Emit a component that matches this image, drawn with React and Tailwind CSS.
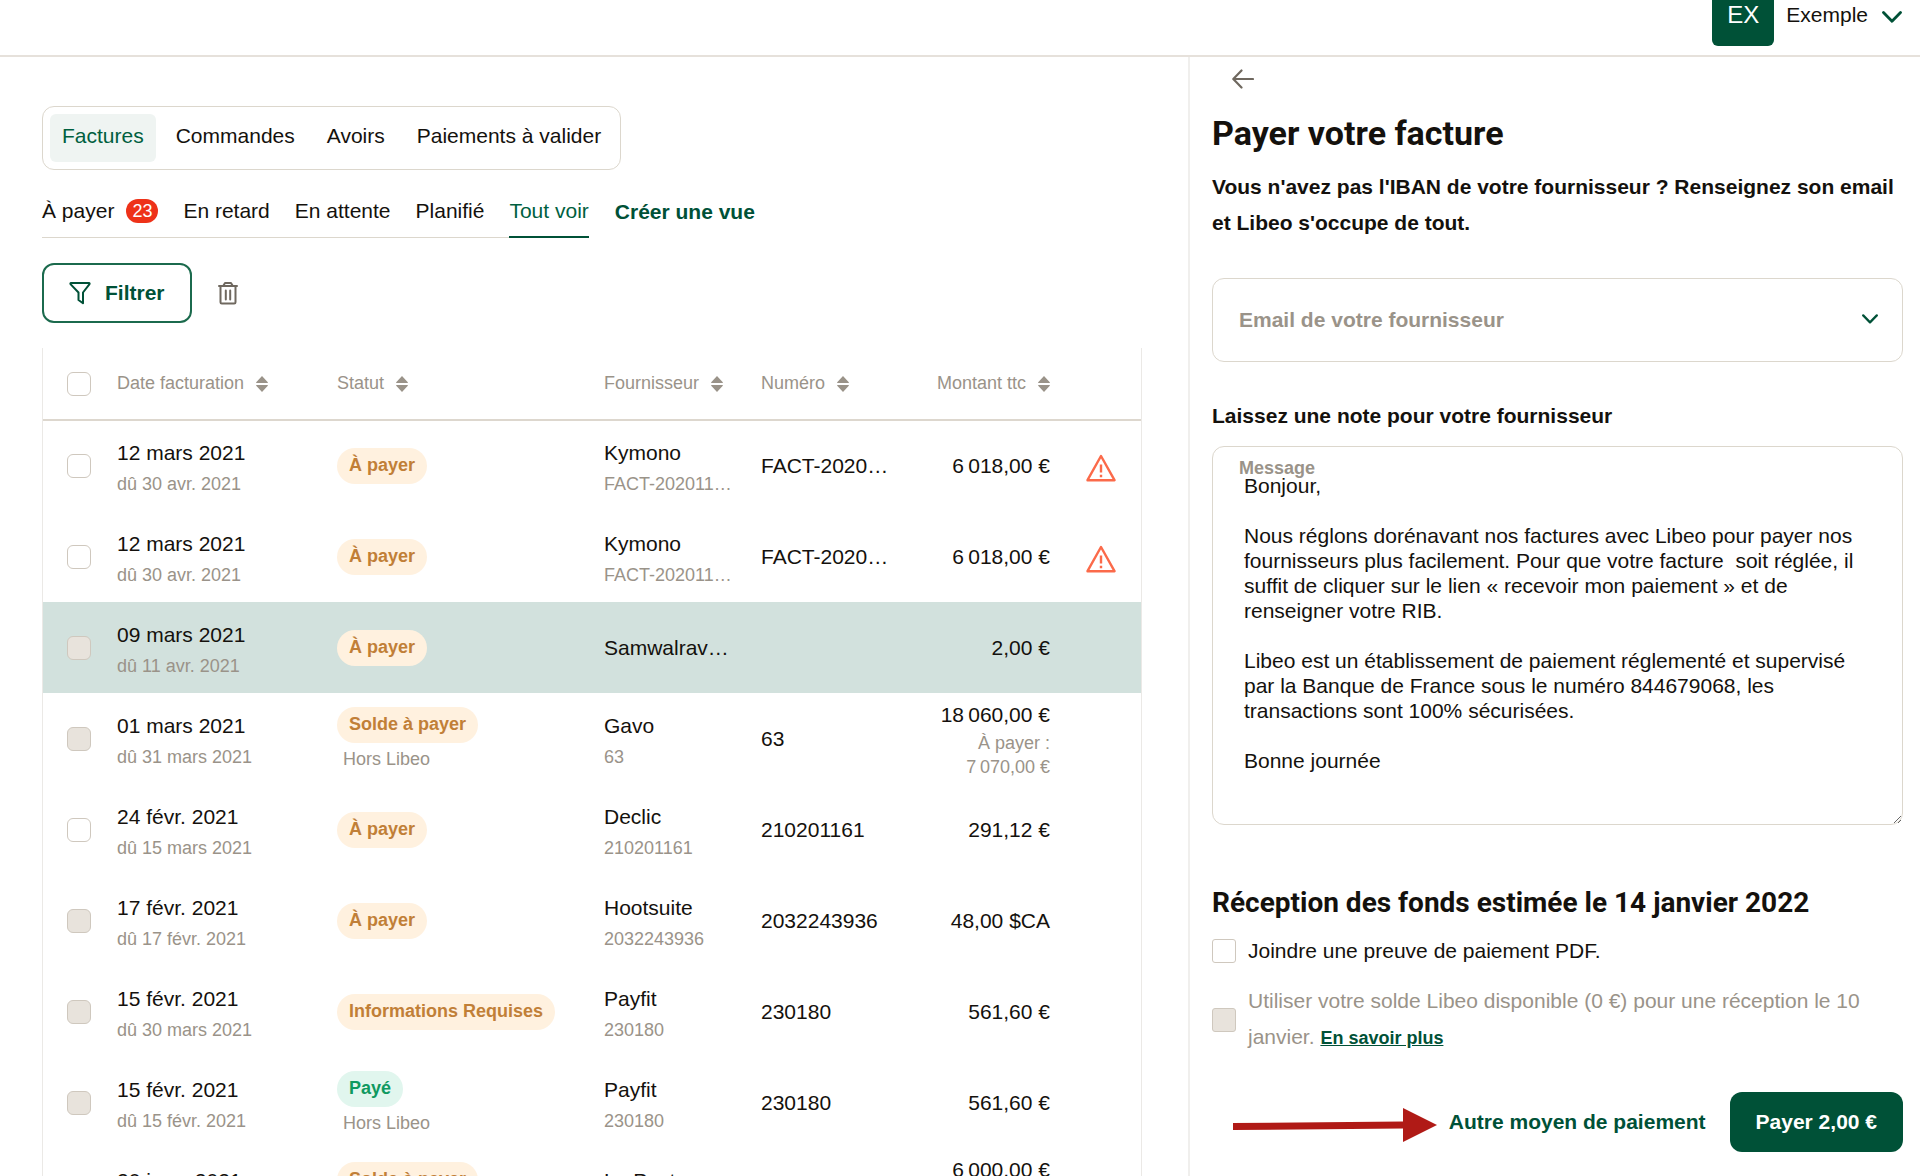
import clsx from "clsx";

const tabs = ["Factures", "Commandes", "Avoirs", "Paiements à valider"];

const views = [
  { label: "À payer", count: 23 },
  { label: "En retard" },
  { label: "En attente" },
  { label: "Planifié" },
  { label: "Tout voir", active: true },
];

const invoices = [
  {
    date: "12 mars 2021",
    due: "dû 30 avr. 2021",
    status: "À payer",
    supplier: "Kymono",
    ref: "FACT-202011…",
    number: "FACT-2020…",
    amount: "6\u202f018,00 €",
    warning: true,
  },
  {
    date: "12 mars 2021",
    due: "dû 30 avr. 2021",
    status: "À payer",
    supplier: "Kymono",
    ref: "FACT-202011…",
    number: "FACT-2020…",
    amount: "6\u202f018,00 €",
    warning: true,
  },
  {
    date: "09 mars 2021",
    due: "dû 11 avr. 2021",
    status: "À payer",
    supplier: "Samwalrav…",
    amount: "2,00 €",
    disabled: true,
    selected: true,
  },
  {
    date: "01 mars 2021",
    due: "dû 31 mars 2021",
    status: "Solde à payer",
    note: "Hors Libeo",
    supplier: "Gavo",
    ref: "63",
    number: "63",
    amount: "18\u202f060,00 €",
    left: "7\u202f070,00 €",
    disabled: true,
  },
  {
    date: "24 févr. 2021",
    due: "dû 15 mars 2021",
    status: "À payer",
    supplier: "Declic",
    ref: "210201161",
    number: "210201161",
    amount: "291,12 €",
  },
  {
    date: "17 févr. 2021",
    due: "dû 17 févr. 2021",
    status: "À payer",
    supplier: "Hootsuite",
    ref: "2032243936",
    number: "2032243936",
    amount: "48,00 $CA",
    disabled: true,
  },
  {
    date: "15 févr. 2021",
    due: "dû 30 mars 2021",
    status: "Informations Requises",
    supplier: "Payfit",
    ref: "230180",
    number: "230180",
    amount: "561,60 €",
    disabled: true,
  },
  {
    date: "15 févr. 2021",
    due: "dû 15 févr. 2021",
    status: "Payé",
    paid: true,
    note: "Hors Libeo",
    supplier: "Payfit",
    ref: "230180",
    number: "230180",
    amount: "561,60 €",
    disabled: true,
  },
  {
    date: "20 janv. 2021",
    due: "dû 20 févr. 2021",
    status: "Solde à payer",
    note: "Hors Libeo",
    supplier: "La Poste",
    ref: "4501",
    amount: "6\u202f000,00 €",
    left: "3\u202f000,00 €",
    disabled: true,
  },
];

const message = `Bonjour,

Nous réglons dorénavant nos factures avec Libeo pour payer nos fournisseurs plus facilement. Pour que votre facture  soit réglée, il suffit de cliquer sur le lien « recevoir mon paiement » et de renseigner votre RIB.

Libeo est un établissement de paiement réglementé et supervisé par la Banque de France sous le numéro 844679068, les transactions sont 100% sécurisées.

Bonne journée`;

const Chevron = ({ className }) => (
  <svg viewBox="0 0 20 12" fill="none" className={className}>
    <path
      d="M1.5 1.5 10 10.2l8.500-8.700"
      stroke="currentColor"
      strokeWidth="2.800"
      strokeLinecap="round"
      strokeLinejoin="round"
    />
  </svg>
);

const SortIcon = () => (
  <svg viewBox="0 0 12 16" fill="currentColor" className="h-4 w-3 shrink-0">
    <path d="M6 0 11.800 6.200a.5.5 0 0 1-.4.8H.6a.5.5 0 0 1-.4-.8Z" />
    <path d="M6 16 11.800 9.800a.5.5 0 0 0-.4-.8H.6a.5.5 0 0 0-.4.8Z" />
  </svg>
);

const FilterIcon = () => (
  <svg viewBox="0 0 22 24" fill="none" className="h-6 w-[22px]">
    <path
      d="M2 2h18c.6 0 .8.7.5 1.100L14 11.500V22.300l-4.500-3.300v-7.500L1.500 3.100C1.200 2.700 1.400 2 2 2Z"
      stroke="currentColor"
      strokeWidth="2"
      strokeLinejoin="round"
    />
  </svg>
);

const TrashIcon = () => (
  <svg viewBox="0 0 20 24" fill="none" stroke="currentColor" strokeWidth="2" className="h-6 w-5">
    <path d="M1 5h18" strokeLinecap="round" />
    <path d="M5.500 4.500 7 2h6l1.500 2.500" strokeLinejoin="round" />
    <path d="M2.500 5v16.200c0 .8.500 1.300 1.300 1.300h12.400c.8 0 1.300-.5 1.300-1.300V5" />
    <path d="M7.800 9.500v9M12.200 9.500v9" strokeLinecap="round" />
  </svg>
);

const WarningIcon = () => (
  <svg viewBox="0 0 30 28" fill="none" stroke="#fb6a4a" className="mt-1 h-7 w-[30px]">
    <path d="M15 2 28.500 26.200h-27Z" strokeWidth="2.400" strokeLinejoin="round" />
    <path d="M15 10.500v8M15 20.800v2.400" strokeWidth="2.400" />
  </svg>
);

const Checkbox = ({ className, ...props }) => (
  <input
    type="checkbox"
    className={clsx(
      "block size-6 shrink-0 appearance-none border border-[#cfc8be] bg-white disabled:bg-[#e8e3dc]",
      className
    )}
    {...props}
  />
);

const Badge = ({ paid, children }) => (
  <span
    className={clsx(
      "inline-block h-9 rounded-full px-3 text-[18px] leading-[34px] font-bold whitespace-nowrap",
      paid ? "bg-[#e1f6ee] text-[#0f9960]" : "bg-[#fff1df] text-[#c17f37]"
    )}
  >
    {children}
  </span>
);

const SortHeader = ({ children, right }) => (
  <th className="p-0 font-normal">
    <button
      type="button"
      className={clsx("flex items-center gap-3 whitespace-nowrap", right && "ml-auto")}
    >
      {children}
      <SortIcon />
    </button>
  </th>
);

const InvoiceRow = ({ invoice }) => (
  <tr className={clsx("h-[91px]", invoice.selected && "bg-[#d2e1dd]")}>
    <td className="p-0 pl-6">
      <Checkbox
        className="rounded-[6px]"
        disabled={invoice.disabled}
        aria-label={`Facture ${invoice.supplier} du ${invoice.date}`}
      />
    </td>
    <td className="p-0 pt-1">
      <div className="leading-8">{invoice.date}</div>
      <div className="text-[18px] leading-[30px] text-[#9a9389]">{invoice.due}</div>
    </td>
    <td className={clsx("p-0", invoice.note && "pt-1")}>
      <Badge paid={invoice.paid}>{invoice.status}</Badge>
      {invoice.note && (
        <div className="pl-[6px] text-[18px] leading-8 text-[#9a9389]">{invoice.note}</div>
      )}
    </td>
    <td className={clsx("p-0 whitespace-nowrap", invoice.ref && "pt-1")}>
      <div className="leading-8">{invoice.supplier}</div>
      {invoice.ref && (
        <div className="text-[18px] leading-[30px] text-[#9a9389]">{invoice.ref}</div>
      )}
    </td>
    <td className="p-0 whitespace-nowrap">{invoice.number}</td>
    <td className="p-0 text-right whitespace-nowrap">
      <div className="leading-8">{invoice.amount}</div>
      {invoice.left && (
        <div className="text-[18px] leading-6 text-[#9a9389]">
          À payer :
          <br />
          {invoice.left}
        </div>
      )}
    </td>
    <td className="p-0 pl-9">{invoice.warning && <WarningIcon />}</td>
  </tr>
);

const Header = () => (
  <header className="flex h-[57px] shrink-0 justify-end border-b-2 border-[#e6e1db] pr-[18px]">
    <button type="button" className="-mt-4 flex h-[62px] items-center">
      <span className="flex h-[62px] w-[62px] items-center justify-center rounded-[6px] bg-[#005137] text-[24px] text-white">
        EX
      </span>
      <span className="pl-3">Exemple</span>
      <Chevron className="mt-1 ml-[14px] h-3 w-5 text-[#005137]" />
    </button>
  </header>
);

const InvoiceList = () => (
  <main className="min-w-0 flex-1 pt-[49px] pr-[46px] pl-[42px]">
    <nav className="flex w-fit gap-2 rounded-xl border border-[#dcd7cd] p-[7px]">
      {tabs.map((tab, i) => (
        <button
          key={tab}
          type="button"
          className={clsx(
            "h-12 rounded-md px-3 pb-1",
            i === 0 && "bg-[#eff4f2] text-[#005f3f]"
          )}
        >
          {tab}
        </button>
      ))}
    </nav>

    <div className="mt-4 flex gap-[26px]">
      <nav className="flex gap-[25px] border-b border-[#dcd7cd]">
        {views.map((view) => (
          <button
            key={view.label}
            type="button"
            className={clsx(
              "-mb-px flex h-[52px] items-center border-b-2",
              view.active ? "border-[#005137] text-[#005f3f]" : "border-transparent"
            )}
          >
            {view.label}
            {view.count && (
              <span className="ml-3 h-6 rounded-full bg-[#ee3219] px-[6px] text-[18px] leading-6 text-white">
                {view.count}
              </span>
            )}
          </button>
        ))}
      </nav>
      <button type="button" className="h-[52px] font-bold text-[#005137]">
        Créer une vue
      </button>
    </div>

    <div className="mt-[25px] flex items-center gap-[26px]">
      <button
        type="button"
        className="flex h-[60px] items-center gap-[14px] rounded-xl border-2 border-[#1b6a4d] px-[25px] font-bold text-[#005137]"
      >
        <FilterIcon />
        Filtrer
      </button>
      <button type="button" aria-label="Supprimer" className="text-[#6f685f]">
        <TrashIcon />
      </button>
    </div>

    <div className="mt-[25px] border-x border-[#ebe9e6]">
      <table className="w-full table-fixed border-collapse text-left">
        <colgroup>
          <col className="w-[74px]" />
          <col className="w-[220px]" />
          <col />
          <col className="w-[157px]" />
          <col className="w-[157px]" />
          <col className="w-[132px]" />
          <col className="w-[91px]" />
        </colgroup>
        <thead>
          <tr className="h-[72px] border-b-2 border-[#ddd7ce] text-[18px] text-[#9a9389]">
            <th className="p-0 pl-6">
              <Checkbox className="rounded-[6px]" aria-label="Tout sélectionner" />
            </th>
            <SortHeader>Date facturation</SortHeader>
            <SortHeader>Statut</SortHeader>
            <SortHeader>Fournisseur</SortHeader>
            <SortHeader>Numéro</SortHeader>
            <SortHeader right>Montant ttc</SortHeader>
            <td className="p-0" />
          </tr>
        </thead>
        <tbody>
          {invoices.map((invoice, i) => (
            <InvoiceRow key={i} invoice={invoice} />
          ))}
        </tbody>
      </table>
    </div>
  </main>
);

const PaymentPanel = () => (
  <aside className="w-[38.125%] shrink-0 border-l-2 border-[#f0efed] pt-2 pr-[17px] pl-[22px]">
    <button type="button" aria-label="Retour" className="ml-5 block text-[#6f685f]">
      <svg viewBox="0 0 22 20" fill="none" className="mt-1 h-5 w-[22px]">
        <path
          d="M21 10H1.500M9.500 1.500 1.300 10l8.200 8.500"
          stroke="currentColor"
          strokeWidth="2.200"
          strokeLinecap="round"
          strokeLinejoin="round"
        />
      </svg>
    </button>

    <h1 className="mt-6 font-['Roboto',sans-serif] text-[34px] leading-10 font-bold">
      Payer votre facture
    </h1>
    <p className="mt-4 leading-9 font-bold">
      Vous n'avez pas l'IBAN de votre fournisseur ? Renseignez son email et Libeo s'occupe de tout.
    </p>

    <div className="relative mt-[37px]">
      <select
        aria-label="Email de votre fournisseur"
        defaultValue=""
        className="h-[84px] w-full appearance-none rounded-xl border border-[#dcd7cd] bg-white px-[26px] font-bold text-[#9a9389]"
      >
        <option value="">Email de votre fournisseur</option>
      </select>
      <Chevron className="pointer-events-none absolute top-9 right-[25px] h-[10px] w-4 text-[#005137]" />
    </div>

    <h2 className="mt-9 leading-9 font-bold">Laissez une note pour votre fournisseur</h2>
    <div className="relative mt-3">
      <label
        htmlFor="message"
        className="absolute top-[10px] left-[27px] text-[18px] leading-6 font-bold text-[#9a9389]"
      >
        Message
      </label>
      <textarea
        id="message"
        defaultValue={message}
        className="block h-[379px] w-full rounded-xl border border-[#dcd7cd] pt-[26px] pr-6 pl-[31px] leading-[25px]"
      />
    </div>

    <h2 className="mt-[58px] font-['Roboto',sans-serif] text-[28px] leading-10 font-bold">
      Réception des fonds estimée le 14 janvier 2022
    </h2>
    <label className="mt-[10px] flex items-center gap-3 leading-9">
      <Checkbox className="rounded-[3px]" />
      Joindre une preuve de paiement PDF.
    </label>
    <div className="mt-[14px] flex items-center gap-3 leading-9 text-[#9a9389]">
      <Checkbox id="balance" className="rounded-[3px]" disabled />
      <p>
        <label htmlFor="balance">
          Utiliser votre solde Libeo disponible (0 €) pour une réception le 10 janvier.
        </label>{" "}
        <a href="#solde" className="text-[18px] font-bold text-[#005137] underline">
          En savoir plus
        </a>
      </p>
    </div>

    <div className="mt-9 flex items-center justify-end">
      <svg viewBox="0 0 204 34" className="mt-[6px] mr-3 h-[34px] w-[204px]">
        <path d="M0 15 170 13.500V0l34 17-34 17V20.500L0 22Z" fill="#b01a16" />
      </svg>
      <button type="button" className="mr-6 font-bold text-[#005137]">
        Autre moyen de paiement
      </button>
      <button
        type="button"
        className="h-[60px] rounded-xl bg-[#005137] px-[26px] font-bold text-white"
      >
        Payer 2,00 €
      </button>
    </div>
  </aside>
);

const App = () => (
  <div className="flex h-screen flex-col overflow-hidden bg-white font-['Liberation_Sans',Arial,sans-serif] text-[21px] text-[#14110d]">
    <Header />
    <div className="flex min-h-0 flex-1">
      <InvoiceList />
      <PaymentPanel />
    </div>
  </div>
);

export default App;
